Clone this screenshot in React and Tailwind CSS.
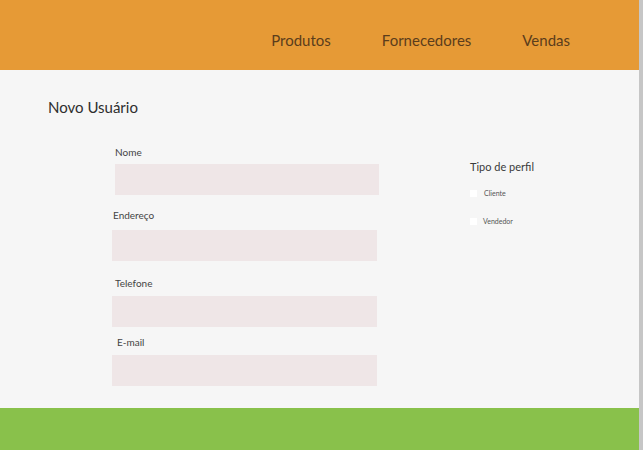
import React from 'react';

const fields = [
    { label: 'Nome', labelClass: 'ml-[3px] mt-0', inputClass: 'ml-[3px] mt-[5px] w-[264px]' },
    { label: 'Endereço', labelClass: 'ml-[1px] mt-[14px]', inputClass: 'mt-[8px] w-[265px]' },
    { label: 'Telefone', labelClass: 'ml-[3px] mt-[16px]', inputClass: 'mt-[6px] w-[265px]' },
    { label: 'E-mail', labelClass: 'ml-[5px] mt-[9px]', inputClass: 'mt-[6px] w-[265px]' },
];

const App = () => {
    return (
        <div className="flex h-[450px] w-[643px] overflow-hidden bg-[#f6f6f6] font-['Lato',sans-serif]">
            <div className="flex w-[639px] flex-col">
                <header className="flex h-[70px] shrink-0 items-center justify-end gap-[51px] bg-[#e69a36] pr-[69px] pt-[10px] text-[15px] text-[#5b3d1c]">
                    <a>Produtos</a>
                    <a>Fornecedores</a>
                    <a>Vendas</a>
                </header>

                <main className="h-[338px] shrink-0 bg-[#f6f6f6] pl-[48px] pt-[27px]">
                    <h1 className="text-[15px] leading-[20px] text-[#2e2e2e]">Novo Usuário</h1>

                    <div className="mt-[29px] flex">
                        <div className="ml-[64px] flex flex-col">
                            {fields.map((f) => (
                                <React.Fragment key={f.label}>
                                    <label className={`text-[10px] leading-[13px] text-[#444] ${f.labelClass}`}>{f.label}</label>
                                    <input className={`h-[31px] bg-[#efe6e7] outline-none ${f.inputClass}`} />
                                </React.Fragment>
                            ))}
                        </div>

                        <div className="ml-[91px] mt-[14px] flex flex-col">
                            <span className="text-[11px] leading-[14px] text-[#3a3a3a]">Tipo de perfil</span>
                            <label className="mt-[14px] flex items-center gap-[6px] text-[7px] leading-[10px] text-[#555]">
                                <span className="h-[7px] w-[7px] bg-white" />
                                <span className="ml-[1px]">Cliente</span>
                            </label>
                            <label className="mt-[18px] flex items-center gap-[6px] text-[7px] leading-[10px] text-[#555]">
                                <span className="h-[7px] w-[7px] bg-white" />
                                <span>Vendedor</span>
                            </label>
                        </div>
                    </div>
                </main>

                <footer className="flex-1 bg-[#89c14b]" />
            </div>
            <div className="w-[4px] bg-[#c6c6c6]" />
        </div>
    );
};

export default App;
